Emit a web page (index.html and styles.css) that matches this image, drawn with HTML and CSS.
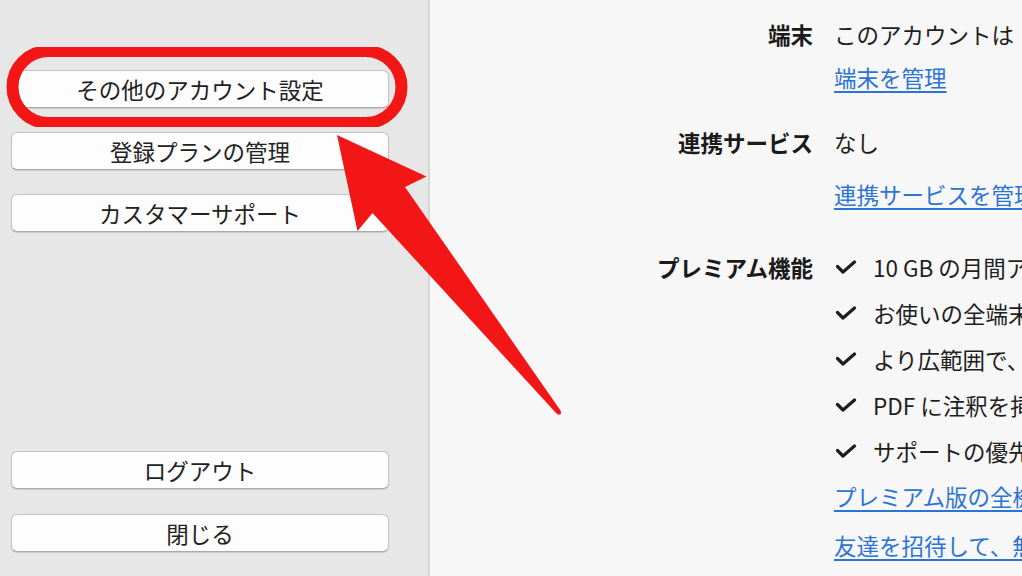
FILE: index.html
```html
<!DOCTYPE html>
<html lang="ja">
<head>
<meta charset="utf-8">
<title>アカウント</title>
<link rel="stylesheet" href="styles.css">
</head>
<body>
<div class="window">
  <aside class="sidebar">
    <div class="btn-group">
      <button class="btn">その他のアカウント設定</button>
      <button class="btn">登録プランの管理</button>
      <button class="btn">カスタマーサポート</button>
    </div>
    <div class="btn-group bottom">
      <button class="btn">ログアウト</button>
      <button class="btn">閉じる</button>
    </div>
  </aside>
  <main class="content">
    <div class="row row-device">
      <div class="label">端末</div>
      <div class="value">
        <div class="line">このアカウントは&#x2002;3 台の端末で使用されています</div>
        <a class="line link" href="#">端末を管理</a>
      </div>
    </div>
    <div class="row row-service">
      <div class="label">連携サービス</div>
      <div class="value">
        <div class="line">なし</div>
        <a class="line link" href="#">連携サービスを管理</a>
      </div>
    </div>
    <div class="row row-premium">
      <div class="label">プレミアム機能</div>
      <div class="value">
        <div class="line check"><svg class="tick" width="22" height="14" viewBox="0 0 22 14"><path d="M2.5 6.5 L8 12 L19.5 2" fill="none" stroke="#1e1e1e" stroke-width="3.2" stroke-linecap="round" stroke-linejoin="round"/></svg>10 GB の月間アップロード容量</div>
        <div class="line check"><svg class="tick" width="22" height="14" viewBox="0 0 22 14"><path d="M2.5 6.5 L8 12 L19.5 2" fill="none" stroke="#1e1e1e" stroke-width="3.2" stroke-linecap="round" stroke-linejoin="round"/></svg>お使いの全端末でオフラインアクセス</div>
        <div class="line check"><svg class="tick" width="22" height="14" viewBox="0 0 22 14"><path d="M2.5 6.5 L8 12 L19.5 2" fill="none" stroke="#1e1e1e" stroke-width="3.2" stroke-linecap="round" stroke-linejoin="round"/></svg>より広範囲で、添付ファイル内も検索</div>
        <div class="line check"><svg class="tick" width="22" height="14" viewBox="0 0 22 14"><path d="M2.5 6.5 L8 12 L19.5 2" fill="none" stroke="#1e1e1e" stroke-width="3.2" stroke-linecap="round" stroke-linejoin="round"/></svg>PDF に注釈を挿入</div>
        <div class="line check"><svg class="tick" width="22" height="14" viewBox="0 0 22 14"><path d="M2.5 6.5 L8 12 L19.5 2" fill="none" stroke="#1e1e1e" stroke-width="3.2" stroke-linecap="round" stroke-linejoin="round"/></svg>サポートの優先対応</div>
        <a class="line link" href="#">プレミアム版の全機能を見る</a>
        <a class="line link last" href="#">友達を招待して、無料でポイントを獲得</a>
      </div>
    </div>
  </main>
  <svg class="annotation" width="1022" height="576" viewBox="0 0 1022 576">
    <defs>
      <filter id="soft" x="-5%" y="-5%" width="110%" height="110%">
        <feGaussianBlur stdDeviation="0.6"/>
      </filter>
    </defs>
    <rect x="12.5" y="51" width="389" height="72" rx="36" ry="36" fill="none" stroke="#f21616" stroke-width="12" filter="url(#soft)"/>
    <path d="M337 135 L426.5 176.5 L405 187 L560.5 410.5 Q562.5 416 557 414 L372.5 213 L357.5 231 Z" fill="#f21616" filter="url(#soft)"/>
  </svg>
</div>
</body>
</html>
```
FILE: styles.css
```css
* { box-sizing: border-box; }
html, body {
  margin: 0;
  padding: 0;
  width: 1022px;
  height: 576px;
  overflow: hidden;
}
body {
  font-family: "Noto Sans CJK JP", "Noto Sans", sans-serif;
  color: #1e1e1e;
  background: #f7f7f7;
}
.window {
  position: relative;
  display: flex;
  width: 1022px;
  height: 576px;
}
.sidebar {
  flex: 0 0 430px;
  display: flex;
  flex-direction: column;
  justify-content: space-between;
  padding: 70px 0 24px 11px;
  background: #e7e7e7;
  border-right: 2px solid #d6d6d6;
}
.btn-group {
  display: flex;
  flex-direction: column;
  gap: 24px;
}
.btn-group.bottom { gap: 25px; }
.btn {
  width: 378px;
  height: 38px;
  padding: 0;
  background: #fdfdfd;
  border: 1px solid #c2c2c2;
  border-bottom-color: #a9a9a9;
  border-radius: 6px;
  box-shadow: 0 1px 1px rgba(0, 0, 0, 0.12);
  font-family: "Noto Sans CJK JP", "Noto Sans", sans-serif;
  font-size: 22.5px;
  line-height: 35px;
  color: #222;
  text-align: center;
}
.content {
  flex: 1;
  padding-top: 19px;
  min-width: 0;
  font-size: 22.5px;
  line-height: 30px;
}
.row {
  display: grid;
  grid-template-columns: 383px 1fr;
  column-gap: 21px;
  white-space: nowrap;
}
.label {
  text-align: right;
  font-weight: 700;
  color: #1a1a1a;
}
.value {
  display: flex;
  flex-direction: column;
  align-items: flex-start;
}
.line { display: block; }
.row-device .value { gap: 13px; }
.row-service { margin-top: 35px; }
.row-service .value { gap: 22px; }
.row-premium { margin-top: 43px; }
.row-premium .value { gap: 16px; }
.row-premium .link { margin-top: -1px; }
.row-premium .link.last { margin-top: 3px; }
.check {
  display: flex;
  align-items: center;
}
.tick {
  margin: 0 16px 0 1px;
  flex: 0 0 auto;
}
.link {
  color: #2c74d4;
  text-decoration: underline;
  text-decoration-thickness: 2px;
  text-underline-offset: 4px;
}
.annotation {
  position: absolute;
  left: 0;
  top: 0;
  pointer-events: none;
}
```
